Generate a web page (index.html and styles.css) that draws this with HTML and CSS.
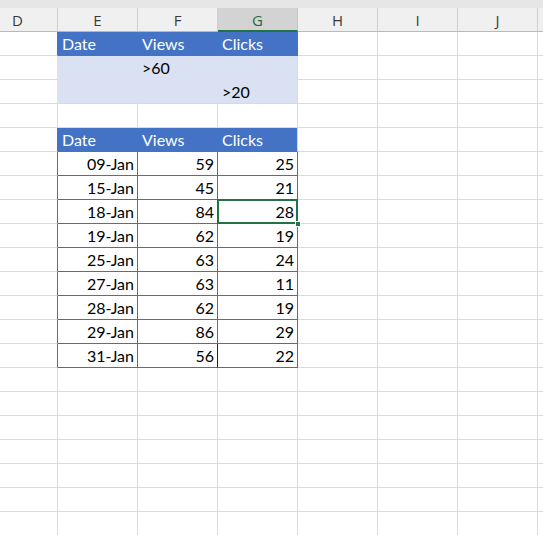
FILE: index.html
```html
<!DOCTYPE html>
<html>
<head>
<meta charset="utf-8">
<link rel="stylesheet" href="styles.css">
</head>
<body>
<div class="sheet">
  <div class="topband"></div>
  <div class="grid">
    <div class="ch">D</div><div class="ch">E</div><div class="ch">F</div><div class="ch sel">G</div><div class="ch">H</div><div class="ch">I</div><div class="ch">J</div><div class="ch"></div>

    <div class="c dfill"></div><div class="c hb">Date</div><div class="c hb">Views</div><div class="c hb">Clicks</div><div class="c"></div><div class="c"></div><div class="c"></div><div class="c"></div>
    <div class="c dlight"></div><div class="c lb"></div><div class="c lb">&gt;60</div><div class="c lb lbe"></div><div class="c"></div><div class="c"></div><div class="c"></div><div class="c"></div>
    <div class="c dlight"></div><div class="c lb lbb"></div><div class="c lb lbb"></div><div class="c lb lbb lbe">&gt;20</div><div class="c"></div><div class="c"></div><div class="c"></div><div class="c"></div>
    <div class="c"></div><div class="c"></div><div class="c"></div><div class="c"></div><div class="c"></div><div class="c"></div><div class="c"></div><div class="c"></div>

    <div class="c dfill"></div><div class="c hb">Date</div><div class="c hb">Views</div><div class="c hb hbe">Clicks</div><div class="c"></div><div class="c"></div><div class="c"></div><div class="c"></div>
    <div class="c dt"></div><div class="c t">09-Jan</div><div class="c t">59</div><div class="c t">25</div><div class="c"></div><div class="c"></div><div class="c"></div><div class="c"></div>
    <div class="c dt"></div><div class="c t">15-Jan</div><div class="c t">45</div><div class="c t">21</div><div class="c"></div><div class="c"></div><div class="c"></div><div class="c"></div>
    <div class="c dt"></div><div class="c t">18-Jan</div><div class="c t">84</div><div class="c t active">28<span class="handle"></span></div><div class="c"></div><div class="c"></div><div class="c"></div><div class="c"></div>
    <div class="c dt"></div><div class="c t">19-Jan</div><div class="c t">62</div><div class="c t">19</div><div class="c"></div><div class="c"></div><div class="c"></div><div class="c"></div>
    <div class="c dt"></div><div class="c t">25-Jan</div><div class="c t">63</div><div class="c t">24</div><div class="c"></div><div class="c"></div><div class="c"></div><div class="c"></div>
    <div class="c dt"></div><div class="c t">27-Jan</div><div class="c t">63</div><div class="c t">11</div><div class="c"></div><div class="c"></div><div class="c"></div><div class="c"></div>
    <div class="c dt"></div><div class="c t">28-Jan</div><div class="c t">62</div><div class="c t">19</div><div class="c"></div><div class="c"></div><div class="c"></div><div class="c"></div>
    <div class="c dt"></div><div class="c t">29-Jan</div><div class="c t">86</div><div class="c t">29</div><div class="c"></div><div class="c"></div><div class="c"></div><div class="c"></div>
    <div class="c dt"></div><div class="c t">31-Jan</div><div class="c t blk">56</div><div class="c t">22</div><div class="c"></div><div class="c"></div><div class="c"></div><div class="c"></div>

    <div class="c"></div><div class="c"></div><div class="c"></div><div class="c"></div><div class="c"></div><div class="c"></div><div class="c"></div><div class="c"></div>
    <div class="c"></div><div class="c"></div><div class="c"></div><div class="c"></div><div class="c"></div><div class="c"></div><div class="c"></div><div class="c"></div>
    <div class="c"></div><div class="c"></div><div class="c"></div><div class="c"></div><div class="c"></div><div class="c"></div><div class="c"></div><div class="c"></div>
    <div class="c"></div><div class="c"></div><div class="c"></div><div class="c"></div><div class="c"></div><div class="c"></div><div class="c"></div><div class="c"></div>
    <div class="c"></div><div class="c"></div><div class="c"></div><div class="c"></div><div class="c"></div><div class="c"></div><div class="c"></div><div class="c"></div>
    <div class="c"></div><div class="c"></div><div class="c"></div><div class="c"></div><div class="c"></div><div class="c"></div><div class="c"></div><div class="c"></div>
    <div class="c"></div><div class="c"></div><div class="c"></div><div class="c"></div><div class="c"></div><div class="c"></div><div class="c"></div><div class="c"></div>
  </div>
</div>
</body>
</html>
```
FILE: styles.css
```css
* { box-sizing: border-box; }
html, body {
  margin: 0;
  padding: 0;
  background: #ffffff;
  overflow: hidden;
}
.sheet {
  width: 543px;
  height: 535px;
  overflow: hidden;
  font-family: Lato, "Liberation Sans", sans-serif;
  font-size: 16px;
  color: #000;
}
.topband {
  height: 8px;
  background: #e6e6e6;
}
.grid {
  display: grid;
  margin-left: -22px;
  grid-template-columns: repeat(7, 80px) 8px;
  grid-auto-rows: 24px;
}
.ch {
  background: #f0f0f0;
  border-right: 1px solid #d0d0d0;
  border-bottom: 1px solid #b9b9b9;
  display: flex;
  align-items: center;
  justify-content: center;
  font-family: "Open Sans", "Noto Sans", sans-serif;
  font-size: 15px;
  color: #3a3a3a;
  padding-top: 1px;
}
.ch.sel {
  background: #d3d3d3;
  color: #1e6b3f;
  border-bottom: 2px solid #217346;
  border-right-color: #c4c4c4;
}
.c {
  border-right: 1px solid #dadada;
  border-bottom: 1px solid #dadada;
  display: flex;
  align-items: flex-end;
  padding: 0 3px 2px 4px;
  line-height: 18px;
  white-space: nowrap;
  position: relative;
}
.hb {
  background: #4472c4;
  border-color: #4472c4;
  color: #ffffff;
}
.hbe { border-right-color: #dadada; }
.dfill { border-right-color: #4472c4; }
.lb {
  background: #d9e1f2;
  border-right-color: #d9e1f2;
  border-bottom-color: #d9e1f2;
}
.lbe { border-right-color: #dadada; }
.lbb { border-bottom-color: #dadada; }
.dlight { border-right-color: #d9e1f2; }
.dt { border-right-color: #4a6fae; }
.t {
  justify-content: flex-end;
  border-right-color: #4a6fae;
  border-bottom-color: #4a6fae;
}
.t.blk { border-right-color: #222; }
.active::after {
  content: "";
  position: absolute;
  left: -1px;
  top: -1px;
  right: -1px;
  bottom: -1px;
  border: 2px solid #217346;
  pointer-events: none;
}
.handle {
  position: absolute;
  right: -4px;
  bottom: -4px;
  width: 6px;
  height: 6px;
  background: #217346;
  border: 1px solid #ffffff;
  z-index: 2;
}
```
